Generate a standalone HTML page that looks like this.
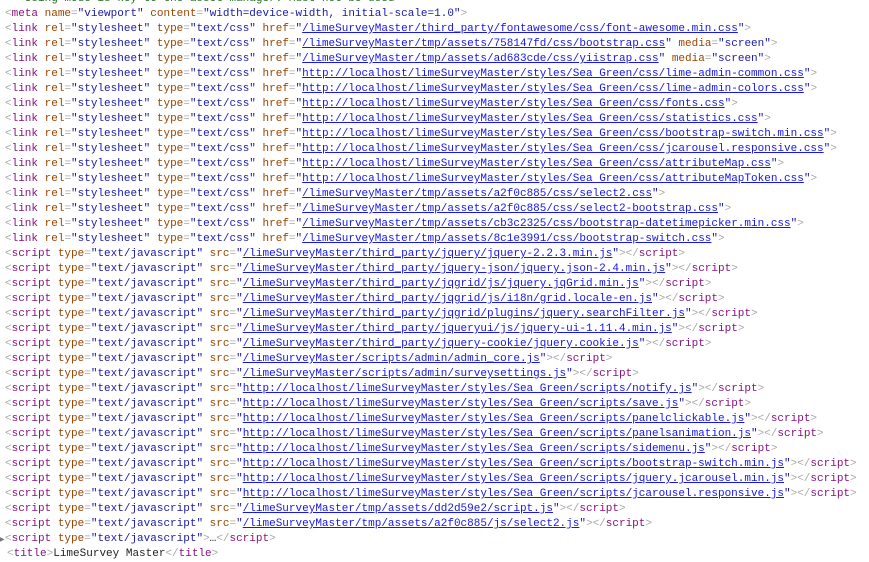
<!DOCTYPE html>
<html><head><meta charset="utf-8"><style>
html,body{margin:0;padding:0;background:#fff;width:869px;height:551px;overflow:hidden}
pre{position:absolute;left:5px;top:-8px;margin:0;font-family:"Liberation Mono",monospace;font-size:11px;line-height:15px;color:#222}
.t{color:#881280}.a{color:#994500}.v{color:#1a1aa6}.g{color:#a8a8a8}.c{color:#236e25}
.u{color:#1717e6;text-decoration:underline}
.ar{position:absolute;left:-5px;color:#777;font-size:6px}
.ti{padding-left:2px}
</style></head><body><pre><span class="c">   Using mode is key to the asset manager. Must not be used --&gt;</span>
<span class="g">&lt;</span><span class="t">meta</span> <span class="a">name</span><span class="g">=</span><span class="v">"viewport"</span> <span class="a">content</span><span class="g">=</span><span class="v">"width=device-width, initial-scale=1.0"</span><span class="g">&gt;</span>
<span class="g">&lt;</span><span class="t">link</span> <span class="a">rel</span><span class="g">=</span><span class="v">"stylesheet"</span> <span class="a">type</span><span class="g">=</span><span class="v">"text/css"</span> <span class="a">href</span><span class="g">=</span><span class="v">"</span><span class="u">/limeSurveyMaster/third_party/fontawesome/css/font-awesome.min.css</span><span class="v">"</span><span class="g">&gt;</span>
<span class="g">&lt;</span><span class="t">link</span> <span class="a">rel</span><span class="g">=</span><span class="v">"stylesheet"</span> <span class="a">type</span><span class="g">=</span><span class="v">"text/css"</span> <span class="a">href</span><span class="g">=</span><span class="v">"</span><span class="u">/limeSurveyMaster/tmp/assets/758147fd/css/bootstrap.css</span><span class="v">"</span> <span class="a">media</span><span class="g">=</span><span class="v">"screen"</span><span class="g">&gt;</span>
<span class="g">&lt;</span><span class="t">link</span> <span class="a">rel</span><span class="g">=</span><span class="v">"stylesheet"</span> <span class="a">type</span><span class="g">=</span><span class="v">"text/css"</span> <span class="a">href</span><span class="g">=</span><span class="v">"</span><span class="u">/limeSurveyMaster/tmp/assets/ad683cde/css/yiistrap.css</span><span class="v">"</span> <span class="a">media</span><span class="g">=</span><span class="v">"screen"</span><span class="g">&gt;</span>
<span class="g">&lt;</span><span class="t">link</span> <span class="a">rel</span><span class="g">=</span><span class="v">"stylesheet"</span> <span class="a">type</span><span class="g">=</span><span class="v">"text/css"</span> <span class="a">href</span><span class="g">=</span><span class="v">"</span><span class="u">http://localhost/limeSurveyMaster/styles/Sea Green/css/lime-admin-common.css</span><span class="v">"</span><span class="g">&gt;</span>
<span class="g">&lt;</span><span class="t">link</span> <span class="a">rel</span><span class="g">=</span><span class="v">"stylesheet"</span> <span class="a">type</span><span class="g">=</span><span class="v">"text/css"</span> <span class="a">href</span><span class="g">=</span><span class="v">"</span><span class="u">http://localhost/limeSurveyMaster/styles/Sea Green/css/lime-admin-colors.css</span><span class="v">"</span><span class="g">&gt;</span>
<span class="g">&lt;</span><span class="t">link</span> <span class="a">rel</span><span class="g">=</span><span class="v">"stylesheet"</span> <span class="a">type</span><span class="g">=</span><span class="v">"text/css"</span> <span class="a">href</span><span class="g">=</span><span class="v">"</span><span class="u">http://localhost/limeSurveyMaster/styles/Sea Green/css/fonts.css</span><span class="v">"</span><span class="g">&gt;</span>
<span class="g">&lt;</span><span class="t">link</span> <span class="a">rel</span><span class="g">=</span><span class="v">"stylesheet"</span> <span class="a">type</span><span class="g">=</span><span class="v">"text/css"</span> <span class="a">href</span><span class="g">=</span><span class="v">"</span><span class="u">http://localhost/limeSurveyMaster/styles/Sea Green/css/statistics.css</span><span class="v">"</span><span class="g">&gt;</span>
<span class="g">&lt;</span><span class="t">link</span> <span class="a">rel</span><span class="g">=</span><span class="v">"stylesheet"</span> <span class="a">type</span><span class="g">=</span><span class="v">"text/css"</span> <span class="a">href</span><span class="g">=</span><span class="v">"</span><span class="u">http://localhost/limeSurveyMaster/styles/Sea Green/css/bootstrap-switch.min.css</span><span class="v">"</span><span class="g">&gt;</span>
<span class="g">&lt;</span><span class="t">link</span> <span class="a">rel</span><span class="g">=</span><span class="v">"stylesheet"</span> <span class="a">type</span><span class="g">=</span><span class="v">"text/css"</span> <span class="a">href</span><span class="g">=</span><span class="v">"</span><span class="u">http://localhost/limeSurveyMaster/styles/Sea Green/css/jcarousel.responsive.css</span><span class="v">"</span><span class="g">&gt;</span>
<span class="g">&lt;</span><span class="t">link</span> <span class="a">rel</span><span class="g">=</span><span class="v">"stylesheet"</span> <span class="a">type</span><span class="g">=</span><span class="v">"text/css"</span> <span class="a">href</span><span class="g">=</span><span class="v">"</span><span class="u">http://localhost/limeSurveyMaster/styles/Sea Green/css/attributeMap.css</span><span class="v">"</span><span class="g">&gt;</span>
<span class="g">&lt;</span><span class="t">link</span> <span class="a">rel</span><span class="g">=</span><span class="v">"stylesheet"</span> <span class="a">type</span><span class="g">=</span><span class="v">"text/css"</span> <span class="a">href</span><span class="g">=</span><span class="v">"</span><span class="u">http://localhost/limeSurveyMaster/styles/Sea Green/css/attributeMapToken.css</span><span class="v">"</span><span class="g">&gt;</span>
<span class="g">&lt;</span><span class="t">link</span> <span class="a">rel</span><span class="g">=</span><span class="v">"stylesheet"</span> <span class="a">type</span><span class="g">=</span><span class="v">"text/css"</span> <span class="a">href</span><span class="g">=</span><span class="v">"</span><span class="u">/limeSurveyMaster/tmp/assets/a2f0c885/css/select2.css</span><span class="v">"</span><span class="g">&gt;</span>
<span class="g">&lt;</span><span class="t">link</span> <span class="a">rel</span><span class="g">=</span><span class="v">"stylesheet"</span> <span class="a">type</span><span class="g">=</span><span class="v">"text/css"</span> <span class="a">href</span><span class="g">=</span><span class="v">"</span><span class="u">/limeSurveyMaster/tmp/assets/a2f0c885/css/select2-bootstrap.css</span><span class="v">"</span><span class="g">&gt;</span>
<span class="g">&lt;</span><span class="t">link</span> <span class="a">rel</span><span class="g">=</span><span class="v">"stylesheet"</span> <span class="a">type</span><span class="g">=</span><span class="v">"text/css"</span> <span class="a">href</span><span class="g">=</span><span class="v">"</span><span class="u">/limeSurveyMaster/tmp/assets/cb3c2325/css/bootstrap-datetimepicker.min.css</span><span class="v">"</span><span class="g">&gt;</span>
<span class="g">&lt;</span><span class="t">link</span> <span class="a">rel</span><span class="g">=</span><span class="v">"stylesheet"</span> <span class="a">type</span><span class="g">=</span><span class="v">"text/css"</span> <span class="a">href</span><span class="g">=</span><span class="v">"</span><span class="u">/limeSurveyMaster/tmp/assets/8c1e3991/css/bootstrap-switch.css</span><span class="v">"</span><span class="g">&gt;</span>
<span class="g">&lt;</span><span class="t">script</span> <span class="a">type</span><span class="g">=</span><span class="v">"text/javascript"</span> <span class="a">src</span><span class="g">=</span><span class="v">"</span><span class="u">/limeSurveyMaster/third_party/jquery/jquery-2.2.3.min.js</span><span class="v">"</span><span class="g">&gt;&lt;/</span><span class="t">script</span><span class="g">&gt;</span>
<span class="g">&lt;</span><span class="t">script</span> <span class="a">type</span><span class="g">=</span><span class="v">"text/javascript"</span> <span class="a">src</span><span class="g">=</span><span class="v">"</span><span class="u">/limeSurveyMaster/third_party/jquery-json/jquery.json-2.4.min.js</span><span class="v">"</span><span class="g">&gt;&lt;/</span><span class="t">script</span><span class="g">&gt;</span>
<span class="g">&lt;</span><span class="t">script</span> <span class="a">type</span><span class="g">=</span><span class="v">"text/javascript"</span> <span class="a">src</span><span class="g">=</span><span class="v">"</span><span class="u">/limeSurveyMaster/third_party/jqgrid/js/jquery.jqGrid.min.js</span><span class="v">"</span><span class="g">&gt;&lt;/</span><span class="t">script</span><span class="g">&gt;</span>
<span class="g">&lt;</span><span class="t">script</span> <span class="a">type</span><span class="g">=</span><span class="v">"text/javascript"</span> <span class="a">src</span><span class="g">=</span><span class="v">"</span><span class="u">/limeSurveyMaster/third_party/jqgrid/js/i18n/grid.locale-en.js</span><span class="v">"</span><span class="g">&gt;&lt;/</span><span class="t">script</span><span class="g">&gt;</span>
<span class="g">&lt;</span><span class="t">script</span> <span class="a">type</span><span class="g">=</span><span class="v">"text/javascript"</span> <span class="a">src</span><span class="g">=</span><span class="v">"</span><span class="u">/limeSurveyMaster/third_party/jqgrid/plugins/jquery.searchFilter.js</span><span class="v">"</span><span class="g">&gt;&lt;/</span><span class="t">script</span><span class="g">&gt;</span>
<span class="g">&lt;</span><span class="t">script</span> <span class="a">type</span><span class="g">=</span><span class="v">"text/javascript"</span> <span class="a">src</span><span class="g">=</span><span class="v">"</span><span class="u">/limeSurveyMaster/third_party/jqueryui/js/jquery-ui-1.11.4.min.js</span><span class="v">"</span><span class="g">&gt;&lt;/</span><span class="t">script</span><span class="g">&gt;</span>
<span class="g">&lt;</span><span class="t">script</span> <span class="a">type</span><span class="g">=</span><span class="v">"text/javascript"</span> <span class="a">src</span><span class="g">=</span><span class="v">"</span><span class="u">/limeSurveyMaster/third_party/jquery-cookie/jquery.cookie.js</span><span class="v">"</span><span class="g">&gt;&lt;/</span><span class="t">script</span><span class="g">&gt;</span>
<span class="g">&lt;</span><span class="t">script</span> <span class="a">type</span><span class="g">=</span><span class="v">"text/javascript"</span> <span class="a">src</span><span class="g">=</span><span class="v">"</span><span class="u">/limeSurveyMaster/scripts/admin/admin_core.js</span><span class="v">"</span><span class="g">&gt;&lt;/</span><span class="t">script</span><span class="g">&gt;</span>
<span class="g">&lt;</span><span class="t">script</span> <span class="a">type</span><span class="g">=</span><span class="v">"text/javascript"</span> <span class="a">src</span><span class="g">=</span><span class="v">"</span><span class="u">/limeSurveyMaster/scripts/admin/surveysettings.js</span><span class="v">"</span><span class="g">&gt;&lt;/</span><span class="t">script</span><span class="g">&gt;</span>
<span class="g">&lt;</span><span class="t">script</span> <span class="a">type</span><span class="g">=</span><span class="v">"text/javascript"</span> <span class="a">src</span><span class="g">=</span><span class="v">"</span><span class="u">http://localhost/limeSurveyMaster/styles/Sea Green/scripts/notify.js</span><span class="v">"</span><span class="g">&gt;&lt;/</span><span class="t">script</span><span class="g">&gt;</span>
<span class="g">&lt;</span><span class="t">script</span> <span class="a">type</span><span class="g">=</span><span class="v">"text/javascript"</span> <span class="a">src</span><span class="g">=</span><span class="v">"</span><span class="u">http://localhost/limeSurveyMaster/styles/Sea Green/scripts/save.js</span><span class="v">"</span><span class="g">&gt;&lt;/</span><span class="t">script</span><span class="g">&gt;</span>
<span class="g">&lt;</span><span class="t">script</span> <span class="a">type</span><span class="g">=</span><span class="v">"text/javascript"</span> <span class="a">src</span><span class="g">=</span><span class="v">"</span><span class="u">http://localhost/limeSurveyMaster/styles/Sea Green/scripts/panelclickable.js</span><span class="v">"</span><span class="g">&gt;&lt;/</span><span class="t">script</span><span class="g">&gt;</span>
<span class="g">&lt;</span><span class="t">script</span> <span class="a">type</span><span class="g">=</span><span class="v">"text/javascript"</span> <span class="a">src</span><span class="g">=</span><span class="v">"</span><span class="u">http://localhost/limeSurveyMaster/styles/Sea Green/scripts/panelsanimation.js</span><span class="v">"</span><span class="g">&gt;&lt;/</span><span class="t">script</span><span class="g">&gt;</span>
<span class="g">&lt;</span><span class="t">script</span> <span class="a">type</span><span class="g">=</span><span class="v">"text/javascript"</span> <span class="a">src</span><span class="g">=</span><span class="v">"</span><span class="u">http://localhost/limeSurveyMaster/styles/Sea Green/scripts/sidemenu.js</span><span class="v">"</span><span class="g">&gt;&lt;/</span><span class="t">script</span><span class="g">&gt;</span>
<span class="g">&lt;</span><span class="t">script</span> <span class="a">type</span><span class="g">=</span><span class="v">"text/javascript"</span> <span class="a">src</span><span class="g">=</span><span class="v">"</span><span class="u">http://localhost/limeSurveyMaster/styles/Sea Green/scripts/bootstrap-switch.min.js</span><span class="v">"</span><span class="g">&gt;&lt;/</span><span class="t">script</span><span class="g">&gt;</span>
<span class="g">&lt;</span><span class="t">script</span> <span class="a">type</span><span class="g">=</span><span class="v">"text/javascript"</span> <span class="a">src</span><span class="g">=</span><span class="v">"</span><span class="u">http://localhost/limeSurveyMaster/styles/Sea Green/scripts/jquery.jcarousel.min.js</span><span class="v">"</span><span class="g">&gt;&lt;/</span><span class="t">script</span><span class="g">&gt;</span>
<span class="g">&lt;</span><span class="t">script</span> <span class="a">type</span><span class="g">=</span><span class="v">"text/javascript"</span> <span class="a">src</span><span class="g">=</span><span class="v">"</span><span class="u">http://localhost/limeSurveyMaster/styles/Sea Green/scripts/jcarousel.responsive.js</span><span class="v">"</span><span class="g">&gt;&lt;/</span><span class="t">script</span><span class="g">&gt;</span>
<span class="g">&lt;</span><span class="t">script</span> <span class="a">type</span><span class="g">=</span><span class="v">"text/javascript"</span> <span class="a">src</span><span class="g">=</span><span class="v">"</span><span class="u">/limeSurveyMaster/tmp/assets/dd2d59e2/script.js</span><span class="v">"</span><span class="g">&gt;&lt;/</span><span class="t">script</span><span class="g">&gt;</span>
<span class="g">&lt;</span><span class="t">script</span> <span class="a">type</span><span class="g">=</span><span class="v">"text/javascript"</span> <span class="a">src</span><span class="g">=</span><span class="v">"</span><span class="u">/limeSurveyMaster/tmp/assets/a2f0c885/js/select2.js</span><span class="v">"</span><span class="g">&gt;&lt;/</span><span class="t">script</span><span class="g">&gt;</span>
<span class="ar">▶</span><span class="g">&lt;</span><span class="t">script</span> <span class="a">type</span><span class="g">=</span><span class="v">"text/javascript"</span><span class="g">&gt;</span>…<span class="g">&lt;/</span><span class="t">script</span><span class="g">&gt;</span>
<span class="ti"><span class="g">&lt;</span><span class="t">title</span><span class="g">&gt;</span>LimeSurvey Master<span class="g">&lt;/</span><span class="t">title</span><span class="g">&gt;</span></span>
</pre></body></html>
